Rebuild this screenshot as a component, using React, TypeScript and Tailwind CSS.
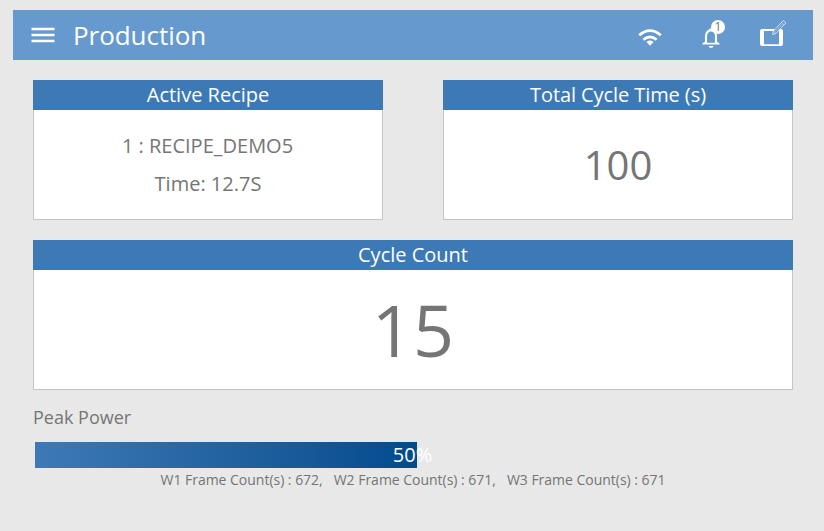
import type { ReactNode } from "react";

function Panel({ title, className, titleClass = "", children }: { title: string; className: string; titleClass?: string; children: ReactNode }) {
  return (
    <section className={`flex flex-col ${className}`}>
      <h2 className={`h-[30px] bg-[#3d7ab5] text-center text-[20px] leading-[30px] text-white ${titleClass}`}>{title}</h2>
      <div className="flex flex-1 flex-col items-center border border-t-0 border-[#c4c4c4] bg-white">{children}</div>
    </section>
  );
}

function MenuIcon() {
  return (
    <svg className="h-[17px] w-[24px]" viewBox="0 0 24 17" fill="#fff">
      <path d="M.5 .8h23v2.4H.5zM.5 6.8h23v2.4H.5zM.5 12.8h23v2.4H.5z" />
    </svg>
  );
}

function WifiIcon() {
  return (
    <svg className="h-[18px] w-[24px]" viewBox="0 0 24 18" fill="none" stroke="#fff" strokeWidth="2.7">
      <path d="M1.2 7.3Q12-2 22.8 7.3M5.4 11.8Q12 5.8 18.6 11.8" />
      <path d="M8.5 14Q12 11.1 15.5 14L12 17.8z" fill="#fff" stroke="none" />
    </svg>
  );
}

function BellIcon() {
  return (
    <svg className="h-[21px] w-[18px]" viewBox="0 0 18 21" fill="none" stroke="#fff">
      <path d="M4 16.5V9.2C4 5.6 6 3.4 9 3.4s5 2.2 5 5.8v7.3" strokeWidth="2.1" />
      <path d="M.5 17.6V16.2L3 14.8v1h12v-1l2.5 1.4v1.4z" fill="#fff" stroke="none" />
      <path d="M6.5 18.9h5c-.4 1.2-1.3 1.9-2.5 1.9s-2.1-.7-2.5-1.9zM7.4 3.2V1.5h3.2v1.7z" fill="#fff" stroke="none" />
    </svg>
  );
}

function TabletPenIcon() {
  return (
    <svg className="h-[27px] w-[27px]" viewBox="0 0 27 27" fill="none" stroke="#fff">
      <path
        d="M2 9h19a2 2 0 0 1 2 2v13a2 2 0 0 1-2 2H2a2 2 0 0 1-2-2V11a2 2 0 0 1 2-2zM4 11v13.3h15V11z"
        fill="#fff"
        fillRule="evenodd"
        stroke="none"
      />
      <path d="M12.6 14.5l.7-3.4L23.3.6l2.6 2.3-10.1 10.6z" fill="#6699cd" strokeWidth=".7" />
      <path d="M13.3 11.1l2.5 2.4M21.5 2.5l2.5 2.4M14.7 12.2l8-8.4" strokeWidth=".4" />
    </svg>
  );
}

export default function App() {
  return (
    <main className="h-[531px] w-[824px] overflow-hidden bg-[#e8e8e8] pt-[10px] pl-[13px] font-['Open_Sans','Noto_Sans',sans-serif] text-[#757575]">
      <header className="flex h-[50px] w-[800px] bg-[#6699cd] text-white">
        <button className="mt-[17px] ml-[18px] h-[17px]" aria-label="Menu">
          <MenuIcon />
        </button>
        <h1 className="ml-[18px] text-[26px] leading-[50px] tracking-[-0.05px]">Production</h1>
        <div className="mr-[26px] ml-auto flex">
          <div className="mt-[18px] mr-[40px]">
            <WifiIcon />
          </div>
          <div className="relative mt-[17px] mr-[40px] w-[18px]">
            <BellIcon />
            <span className="absolute top-[-7px] left-[9px] h-[14px] w-[14px] rounded-full bg-white text-center text-[12px] leading-[14px] text-[#757575]">
              1
            </span>
          </div>
          <div className="mt-[10px]">
            <TabletPenIcon />
          </div>
        </div>
      </header>

      <div className="mt-5 ml-5 w-[760px]">
        <div className="flex justify-between">
          <Panel title="Active Recipe" className="h-[140px] w-[350px]">
            <p className="mt-[17px] mr-px text-[20px] leading-[38px]">1 : RECIPE_DEMO5</p>
            <p className="text-[20px] leading-[38px]">Time: 12.7S</p>
          </Panel>
          <Panel title="Total Cycle Time (s)" className="h-[140px] w-[350px]" titleClass="tracking-[-0.08px]">
            <p className="text-[40px] leading-[109px]">100</p>
          </Panel>
        </div>
        <Panel title="Cycle Count" className="mt-5 h-[150px]">
          <p className="text-[72px] leading-[119px]">15</p>
        </Panel>

        <p className="mt-[14px] h-[38px] text-[18px] leading-[26px]">Peak Power</p>
        <div className="ml-[2px] h-[26px] w-[756px]">
          <div className="h-[26px] w-[382px] bg-linear-to-r from-[#3d7ab5] to-[#004b8d]">
            <p className="w-[755px] text-center text-[20px] leading-[26px] text-white">50%</p>
          </div>
        </div>
        <p className="flex justify-center gap-[11px] text-[14px] leading-[24px] tracking-[-0.02px]">
          <span>W1 Frame Count(s) : 672,</span>
          <span>W2 Frame Count(s) : 671,</span>
          <span>W3 Frame Count(s) : 671</span>
        </p>
      </div>
    </main>
  );
}
